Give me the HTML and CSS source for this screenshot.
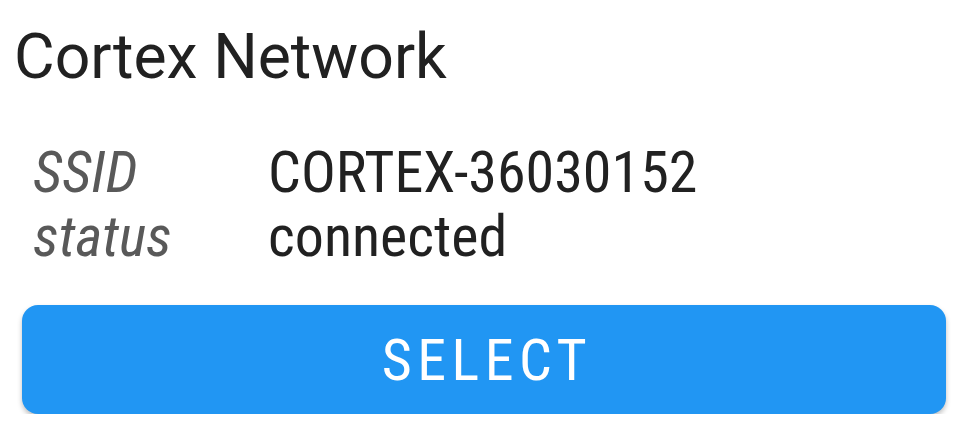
FILE: index.html
```html
<!DOCTYPE html>
<html>
    <head>
        <title>Cortex Network</title>
        <meta charset="UTF-8">
        <meta name="viewport" content="width=device-width, initial-scale=1.0">
        <link rel="stylesheet" href="styles.css">
    </head>
    <body>
        <div class="card">
            <h1 class="title">Cortex Network</h1>
            <div class="info">
                <span class="key">SSID</span><span class="val">CORTEX-36030152</span>
                <span class="key">status</span><span class="val">connected</span>
            </div>
            <button class="btn" type="button">SELECT</button>
        </div>
    </body>
</html>
```

FILE: styles.css
```css
*{
    box-sizing: border-box;
}
body{
    margin: 0;
    background-color: #ffffff;
    font-family: Roboto, "Noto Sans", sans-serif;
}
.card{
    padding: 12px 22px 0 22px;
}
.title{
    margin: 0 0 0 -8px;
    font-size: 62.5px;
    font-weight: 400;
    line-height: 90px;
    color: #212121;
}
.info{
    display: grid;
    grid-template-columns: 235px auto;
    margin: 38px 0 0 11px;
    font-size: 58px;
    line-height: 64px;
    font-stretch: condensed;
}
.key{
    font-style: italic;
    color: #595959;
}
.val{
    color: #212121;
}
.btn{
    display: block;
    width: 924px;
    height: 109px;
    margin-top: 37px;
    border: 0;
    border-radius: 16px;
    background-color: #2196F3;
    color: #ffffff;
    font-family: Roboto, "Noto Sans", sans-serif;
    font-size: 58px;
    font-stretch: condensed;
    letter-spacing: 5.5px;
    padding: 0 0 0 6px;
    box-shadow: 0 3px 5px rgba(0,0,0,0.25);
}
```
